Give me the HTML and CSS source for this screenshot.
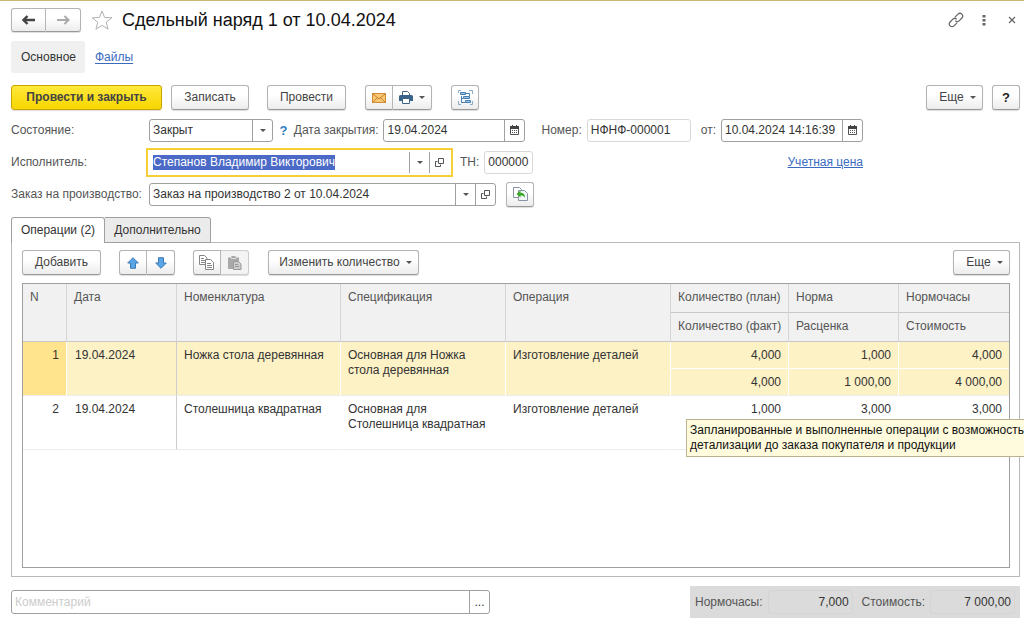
FILE: index.html
```html
<!DOCTYPE html>
<html lang="ru">
<head>
    <meta charset="UTF-8">
    <meta name="viewport" content="width=device-width, initial-scale=1.0">
    <title>Сдельный наряд 1 от 10.04.2024</title>
    <link rel="stylesheet" href="styles.css">
</head>
<body>
    <header class="title-bar">
        <div class="btn-group nav-buttons">
            <button class="btn" aria-label="Назад">
                <svg width="14" height="10" viewBox="0 0 14 10"><path d="M5.5 1 1.5 5l4 4M2 5h11" fill="none" stroke="#444" stroke-width="2.4"/></svg>
            </button>
            <button class="btn" aria-label="Вперед">
                <svg width="14" height="10" viewBox="0 0 14 10"><path d="M8.5 1l4 4-4 4M12 5H1" fill="none" stroke="#aaa" stroke-width="2"/></svg>
            </button>
        </div>
        <svg class="star" width="22" height="20" viewBox="0 0 22 20"><path d="M11 1l2.6 6.400 7.200.400-5.600 4.500 1.900 6.900L11 15.300l-6.100 3.900 1.900-6.900L1.200 7.800l7.200-.400z" fill="#fff" stroke="#b0b0b0"/></svg>
        <h1>Сдельный наряд 1 от 10.04.2024</h1>
        <div class="window-tools">
            <button class="icon-btn" aria-label="Ссылка">
                <svg width="16" height="16" viewBox="0 0 16 16" fill="none" stroke="#666" stroke-width="1.2"><path d="M7 5.2l3-3a2.7 2.7 0 0 1 3.9 3.8l-2.8 2.8a2.7 2.7 0 0 1-3.8 0"/><path d="M9 10.8l-3 3a2.7 2.7 0 0 1-3.9-3.8l2.8-2.8a2.7 2.7 0 0 1 3.8 0"/></svg>
            </button>
            <button class="icon-btn" aria-label="Меню">
                <svg width="4" height="12" viewBox="0 0 4 12" fill="#666"><path d="M.5 1h3v2.5h-3zM.5 5h3v2.5h-3zM.5 9h3v2.5h-3z"/></svg>
            </button>
            <button class="icon-btn" aria-label="Закрыть">
                <svg width="8" height="8" viewBox="0 0 8 8"><path d="M1 1l6 6M7 1L1 7" stroke="#666" stroke-width="1.2"/></svg>
            </button>
        </div>
    </header>

    <nav class="sections">
        <span class="section-current">Основное</span>
        <a href="#files">Файлы</a>
    </nav>

    <div class="toolbar">
        <button class="btn btn-main">Провести и закрыть</button>
        <button class="btn btn-save">Записать</button>
        <button class="btn btn-post">Провести</button>
        <div class="btn-group mail-print">
            <button class="btn btn-icon" aria-label="Отправить">
                <svg width="14" height="10" viewBox="0 0 14 10"><rect x=".5" y=".5" width="13" height="9" fill="#f8c774" stroke="#d08b35"/><path d="M1 1l6 5 6-5M1 9l4.5-4.3M13 9L8.5 4.7" fill="none" stroke="#c9822d"/></svg>
            </button>
            <button class="btn btn-print" aria-label="Печать">
                <svg width="14" height="13" viewBox="0 0 14 13"><path d="M3.5 5V.5h5l2 2V5" fill="#fff" stroke="#46647f"/><path d="M1.5 4h11A1.5 1.5 0 0 1 14 5.5V10H0V5.5A1.5 1.5 0 0 1 1.5 4z" fill="#3b6288"/><path d="M3.5 7.5h7v5h-7z" fill="#fff" stroke="#3b6288"/></svg>
                <span class="caret"></span>
            </button>
        </div>
        <button class="btn btn-icon btn-structure" aria-label="Структура подчиненности">
            <svg width="15" height="15" viewBox="0 0 15 15" fill="none"><path d="M3 .5H.5V3M11 .5h3.500V4M14.500 11v3.500H12M.500 11v3.500H3" stroke="#8aabc8"/><path d="M8 3.500h3.500V6M3.500 6v6.500H7M5 8.500H3.500" stroke="#4580b5"/><path d="M2.500 2.500h5v2h-5zM5.500 6.500h6v2h-6zM7.500 10.500h5v2h-5z" fill="#9cc4e6" stroke="#4580b5"/></svg>
        </button>
        <button class="btn btn-more">Еще <span class="caret"></span></button>
        <button class="btn btn-help">?</button>
    </div>

    <form class="details">
        <div class="form-row">
            <label class="row-label" for="state">Состояние:</label>
            <div class="field w-state">
                <input type="text" id="state" value="Закрыт">
                <button type="button" aria-label="Выбрать"><span class="caret"></span></button>
            </div>
            <button type="button" class="hint">?</button>
            <label for="close-date">Дата закрытия:</label>
            <div class="field w-date">
                <input type="text" id="close-date" value="19.04.2024">
                <button type="button" aria-label="Календарь">
                    <svg width="9" height="10" viewBox="0 0 9 10"><path d="M.5 1.5h8v8h-8z" fill="#fff" stroke="#555"/><path d="M0 1h9v3H0zM2 0h1v2H2zM6 0h1v2H6z" fill="#444"/><path d="M2 5.5h5M2 7.5h5" stroke="#555" stroke-dasharray="1 1"/></svg>
                </button>
            </div>
            <label class="label-number" for="number">Номер:</label>
            <div class="field readonly w-number"><input type="text" id="number" value="НФНФ-000001" readonly></div>
            <label class="label-from" for="doc-date">от:</label>
            <div class="field w-date">
                <input type="text" id="doc-date" value="10.04.2024 14:16:39">
                <button type="button" aria-label="Календарь">
                    <svg width="9" height="10" viewBox="0 0 9 10"><path d="M.5 1.5h8v8h-8z" fill="#fff" stroke="#555"/><path d="M0 1h9v3H0zM2 0h1v2H2zM6 0h1v2H6z" fill="#444"/><path d="M2 5.5h5M2 7.5h5" stroke="#555" stroke-dasharray="1 1"/></svg>
                </button>
            </div>
        </div>
        <div class="form-row">
            <label class="row-label" for="worker">Исполнитель:</label>
            <div class="field focused w-worker">
                <input type="text" id="worker" value="Степанов Владимир Викторович">
                <button type="button" aria-label="Выбрать"><span class="caret"></span></button>
                <button type="button" aria-label="Открыть">
                    <svg width="9" height="9" viewBox="0 0 9 9" fill="none" stroke="#555"><path d="M3.5 .5h5v5h-5z"/><path d="M2.5 3.5h-2v5h5v-2"/></svg>
                </button>
            </div>
            <label class="label-tn" for="tn">ТН:</label>
            <div class="field readonly w-tn"><input type="text" id="tn" value="000000" readonly></div>
            <a class="price-link" href="#price">Учетная цена</a>
        </div>
        <div class="form-row">
            <label class="row-label" for="order">Заказ на производство:</label>
            <div class="field w-order">
                <input type="text" id="order" value="Заказ на производство 2 от 10.04.2024">
                <button type="button" aria-label="Выбрать"><span class="caret"></span></button>
                <button type="button" aria-label="Открыть">
                    <svg width="9" height="9" viewBox="0 0 9 9" fill="none" stroke="#555"><path d="M3.5 .5h5v5h-5z"/><path d="M2.5 3.5h-2v5h5v-2"/></svg>
                </button>
            </div>
            <button type="button" class="btn btn-icon btn-fill" aria-label="Заполнить">
                <svg width="15" height="14" viewBox="0 0 15 14"><path d="M.5 .5h6l2 2v8h-8z" fill="#fff" stroke="#8794a5"/><path d="M5.5 3.5h6l3 3v7h-9z" fill="#f2f5f9" stroke="#8794a5"/><path d="M3.5 7l4-3.5v2.2c3 0 4.500 1.500 4.500 5-1-1.800-2.300-2.300-4.500-2.300v2.200z" fill="#3aa822"/></svg>
            </button>
        </div>
    </form>

    <div class="tabs">
        <button class="tab active">Операции (2)</button>
        <button class="tab">Дополнительно</button>
    </div>

    <main class="panel">
        <div class="toolbar">
            <button class="btn btn-add">Добавить</button>
            <div class="btn-group move-buttons">
                <button class="btn btn-icon" aria-label="Вверх">
                    <svg width="12" height="12" viewBox="0 0 12 12"><path d="M6 .7L11.300 6H8.500v5.300h-5V6H.700z" fill="#5aa5e8" stroke="#3a79b4"/></svg>
                </button>
                <button class="btn btn-icon" aria-label="Вниз">
                    <svg width="12" height="12" viewBox="0 0 12 12"><path d="M6 11.300L.700 6h2.800V.700h5V6h2.800z" fill="#5aa5e8" stroke="#3a79b4"/></svg>
                </button>
            </div>
            <div class="btn-group copy-buttons">
                <button class="btn btn-icon" aria-label="Копировать">
                    <svg width="16" height="15" viewBox="0 0 16 15" fill="#fff" stroke="#858585"><path d="M.5 .5h5l2.500 2.500v6.500H.500z"/><path d="M2 3.500h3M2 5.500h4M2 7.500h4"/><path d="M6.500 4.500h5l3 3v7h-8z"/><path d="M8 8.500h4M8 10.500h5M8 12.500h5"/></svg>
                </button>
                <button class="btn btn-icon" aria-label="Вставить" disabled>
                    <svg width="14" height="14" viewBox="0 0 14 14"><path d="M0 1.500h3.500V0h4v1.500H11V13H0z" fill="#a9a9a9"/><path d="M3 2.500h5" stroke="#ddd"/><path d="M5.500 5.500h5l2.500 2.500v5.500H5.500z" fill="#ccc" stroke="#999"/><path d="M7 8.500h3M7 10.500h4" stroke="#999"/></svg>
                </button>
            </div>
            <button class="btn btn-quantity">Изменить количество <span class="caret"></span></button>
            <button class="btn btn-more">Еще <span class="caret"></span></button>
        </div>

        <div class="table-box">
            <table class="operations">
                <colgroup>
                    <col class="col-n"><col class="col-date"><col class="col-item"><col class="col-spec">
                    <col class="col-op"><col class="col-qty"><col class="col-rate"><col class="col-sum">
                </colgroup>
                <thead>
                    <tr>
                        <th rowspan="2">N</th>
                        <th rowspan="2">Дата</th>
                        <th rowspan="2">Номенклатура</th>
                        <th rowspan="2">Спецификация</th>
                        <th rowspan="2">Операция</th>
                        <th>Количество (план)</th>
                        <th>Норма</th>
                        <th>Нормочасы</th>
                    </tr>
                    <tr>
                        <th>Количество (факт)</th>
                        <th>Расценка</th>
                        <th>Стоимость</th>
                    </tr>
                </thead>
                <tbody class="selected">
                    <tr>
                        <td rowspan="2" class="num row-number">1</td>
                        <td rowspan="2" class="date">19.04.2024</td>
                        <td rowspan="2">Ножка стола деревянная</td>
                        <td rowspan="2">Основная для Ножка стола деревянная</td>
                        <td rowspan="2">Изготовление деталей</td>
                        <td class="num">4,000</td>
                        <td class="num">1,000</td>
                        <td class="num">4,000</td>
                    </tr>
                    <tr>
                        <td class="num">4,000</td>
                        <td class="num">1 000,00</td>
                        <td class="num">4 000,00</td>
                    </tr>
                </tbody>
                <tbody>
                    <tr>
                        <td rowspan="2" class="num row-number">2</td>
                        <td rowspan="2" class="date">19.04.2024</td>
                        <td rowspan="2">Столешница квадратная</td>
                        <td rowspan="2">Основная для Столешница квадратная</td>
                        <td rowspan="2">Изготовление деталей</td>
                        <td class="num">1,000</td>
                        <td class="num">3,000</td>
                        <td class="num">3,000</td>
                    </tr>
                    <tr>
                        <td class="num"></td>
                        <td class="num"></td>
                        <td class="num"></td>
                    </tr>
                </tbody>
            </table>
            <div class="tooltip" role="tooltip">Запланированные и выполненные операции с возможность<br>детализации до заказа покупателя и продукции</div>
        </div>
    </main>

    <footer class="bottom">
        <div class="field w-comment">
            <input type="text" id="comment" placeholder="Комментарий" aria-label="Комментарий">
            <button type="button">...</button>
        </div>
        <div class="totals">
            <label for="total-hours">Нормочасы:</label>
            <input type="text" id="total-hours" value="7,000" readonly>
            <label for="total-cost">Стоимость:</label>
            <input type="text" id="total-cost" value="7 000,00" readonly>
        </div>
    </footer>

    <script>
        // The worker field is being edited when the form opens
        const worker = document.getElementById('worker');
        worker.focus();
        worker.select();
    </script>
</body>
</html>
```
FILE: styles.css
```css
* {
    box-sizing: border-box;
}
body {
    display: flex;
    flex-direction: column;
    min-height: 100vh;
    margin: 0;
    padding: 7px 4px 7px 11px;
    border-top: 1px solid #c9b870;
    background: #fff;
    color: #333;
    font-family: "Liberation Sans", Arial, sans-serif;
    font-size: 12px;
    line-height: 15px;
    overflow-x: hidden;
}
button, input {
    font: inherit;
    color: inherit;
}
button {
    padding: 0;
}
svg {
    display: block;
}
a {
    color: #3a6bbf;
}

/* buttons */
.btn {
    display: flex;
    align-items: center;
    justify-content: center;
    gap: 6px;
    height: 25px;
    border: 1px solid #b3b3b3;
    border-bottom-color: #999;
    border-radius: 3px;
    background: linear-gradient(#fff 40%, #ececec);
    box-shadow: 0 1px 1px #ddd;
    color: #444;
    white-space: nowrap;
}
.btn-group {
    display: flex;
}
.btn-group .btn:first-child {
    border-radius: 3px 0 0 3px;
}
.btn-group .btn:last-child {
    border-left: 0;
    border-radius: 0 3px 3px 0;
}
.btn:disabled {
    background: #f3f3f3;
    border-color: #ccc;
}
.btn-icon {
    width: 28px;
}
.btn-main {
    width: 151px;
    border-color: #c9a400;
    background: linear-gradient(#ffe93b, #f7d600);
    font-weight: bold;
}
.btn-save {
    width: 78px;
}
.btn-post, .btn-add {
    width: 79px;
}
.btn-post {
    margin-left: 9px;
}
.btn-print {
    width: 39px;
}
.mail-print, .btn-structure {
    margin-left: 10px;
}
.btn-more {
    width: 57px;
    margin-left: auto;
    padding-left: 6px;
}
.btn-help {
    width: 28px;
    color: #222;
    font-size: 13px;
    font-weight: bold;
}
.btn-quantity {
    width: 151px;
    margin-left: 10px;
    padding-left: 4px;
}
.caret {
    border: 3px solid transparent;
    border-top-color: #555;
    border-bottom: 0;
}
.toolbar {
    display: flex;
    gap: 9px;
}

/* window title */
.title-bar {
    display: flex;
    align-items: center;
    height: 24px;
}
.nav-buttons .btn {
    width: 35px;
    height: 24px;
}
.star {
    margin: 0 9px 0 10px;
}
h1 {
    margin: 0;
    color: #111;
    font-size: 18px;
    font-weight: normal;
    line-height: 24px;
}
.window-tools {
    display: flex;
    align-items: center;
    gap: 12px;
    margin-left: auto;
}
.icon-btn {
    width: 16px;
    border: 0;
    background: none;
}
.icon-btn svg {
    margin: 0 auto;
}
.sections {
    display: flex;
    align-items: center;
    gap: 10px;
    margin: 9px 0 12px;
}
.section-current {
    padding: 9px 9px 8px 10px;
    border-radius: 3px;
    background: #f0f0f0;
}
.sections a {
    text-underline-offset: 2px;
}

/* document fields */
.details {
    max-width: 852px;
    margin: 4px 0 7px;
}
.form-row {
    display: flex;
    align-items: center;
    height: 32px;
    color: #555;
    white-space: nowrap;
}
.row-label {
    flex: none;
    width: 138px;
}
.field {
    display: flex;
    height: 23px;
    border: 1px solid #a0a0a0;
    border-radius: 3px;
    background: #fff;
}
.field input {
    flex: 1;
    min-width: 0;
    padding: 0 3px;
    border: 0;
    outline: 0;
    background: none;
    color: #333;
}
.field input::placeholder {
    color: #ccc;
}
.field input::selection {
    background: #4b69c6;
    color: #fff;
}
.field button {
    display: flex;
    align-items: center;
    justify-content: center;
    width: 20px;
    border: 0;
    border-left: 1px solid #a0a0a0;
    background: none;
}
.readonly {
    border-color: #d8d8d8;
}
.focused {
    outline: 2px solid #f5cf35;
    outline-offset: 1px;
    border-color: #fff;
    border-radius: 0;
}
.hint {
    width: 22px;
    border: 0;
    background: none;
    color: #2f7fc4;
    font-size: 13px;
    font-weight: bold;
}
.w-state {
    width: 124px;
}
.w-date {
    width: 142px;
    margin-left: 5px;
}
.w-number {
    width: 104px;
    margin-left: 5px;
}
.w-worker {
    width: 301px;
}
.w-tn {
    width: 49px;
    margin-left: 5px;
}
.w-order {
    width: 347px;
}
.label-number {
    margin-left: 16px;
}
.label-from, .label-tn, .btn-fill {
    margin-left: 10px;
}
.price-link {
    margin-left: auto;
}

/* tabs and table */
.tabs {
    position: relative;
    display: flex;
    height: 26px;
}
.tab {
    width: 106px;
    border: 1px solid #a0a0a0;
    border-left: 0;
    border-radius: 0 3px 0 0;
    background: #ebebeb;
}
.tab.active {
    width: 94px;
    border-left: 1px solid #a0a0a0;
    border-bottom: 0;
    border-radius: 3px 3px 0 0;
    background: #fff;
}
.panel {
    display: flex;
    flex-direction: column;
    flex: 1;
    margin-top: -1px;
    padding: 7px 9px 8px 10px;
    border: 1px solid #b8b8b8;
}
.move-buttons, .copy-buttons {
    margin-left: 9px;
}
.table-box {
    position: relative;
    flex: 1;
    margin-top: 8px;
    border: 1px solid #a0a0a0;
}
.operations {
    width: 100%;
    table-layout: fixed;
    border-collapse: separate;
    border-spacing: 0;
}
.col-n { width: 44px; }
.col-date { width: 110px; }
.col-item { width: 164px; }
.col-spec { width: 165px; }
.col-op { width: 165px; }
.col-qty { width: 118px; }
.col-rate { width: 110px; }
.col-sum { width: 110px; }
th, td {
    padding: 6px 7px 0;
    text-align: left;
    vertical-align: top;
}
th {
    height: 29px;
    border-right: 1px solid #d5d5d5;
    border-bottom: 1px solid #c8c8c8;
    background: #f1f1f1;
    color: #555;
    font-weight: normal;
    white-space: nowrap;
}
td {
    height: 27px;
    border-right: 1px solid #fff;
    border-bottom: 1px solid #fff;
}
td[rowspan], tr:last-child td {
    border-bottom-color: #ececec;
}
th:last-child, td:last-child {
    border-right: 0;
}
.selected td {
    background: #fdf1c6;
}
.selected .row-number {
    background: #ffe38d;
}
td.date {
    padding-left: 8px;
    border-right-color: #ccc;
}
.num {
    text-align: right;
}
.tooltip {
    position: absolute;
    top: 135px;
    right: -15px;
    width: 338px;
    padding: 3px 0 3px 3px;
    border: 1px solid #b9b38f;
    border-right: 0;
    background: #fffbdc;
    color: #111;
    white-space: nowrap;
    overflow: hidden;
}

/* comment and totals */
.bottom {
    display: flex;
    align-items: center;
    justify-content: space-between;
    margin-top: 9px;
}
.w-comment {
    width: 479px;
    height: 24px;
}
.totals {
    display: flex;
    align-items: center;
    gap: 5px;
    height: 32px;
    padding: 0 5px;
    background: #dbdbdb;
    color: #555;
}
.totals input {
    width: 85px;
    height: 24px;
    padding: 0 3px;
    border: 1px solid #d5d5d5;
    border-radius: 3px;
    background: none;
    color: #333;
    text-align: right;
}
.totals input + label {
    margin-left: 4px;
}
```
